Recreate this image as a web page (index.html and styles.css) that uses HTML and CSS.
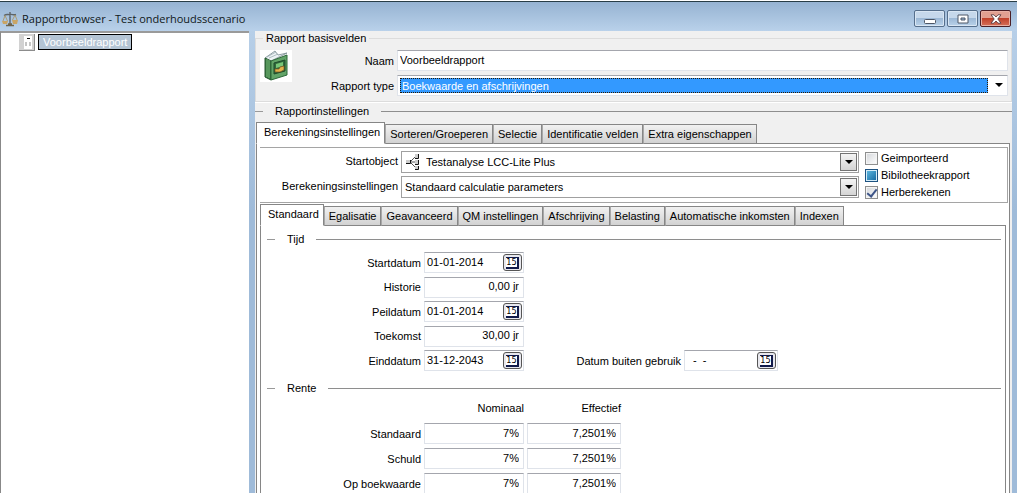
FILE: index.html
```html
<!DOCTYPE html>
<html lang="nl">
<head>
<meta charset="utf-8">
<title>Rapportbrowser - Test onderhoudsscenario</title>
<link rel="stylesheet" href="styles.css">
</head>
<body>
<div class="window">
  <header class="titlebar">
    <svg class="app-icon" width="16" height="16" viewBox="0 0 16 16" fill="none">
      <path d="M2 4.500C5 2.500 6 4 8 3.500S12 4.500 14 3.500M8 1v12" stroke="#5e6468" stroke-width="1.400"/>
      <path d="M3 4.500L1 10M3 4.500L5.500 10M13 4L10.500 9M13 4L15 9" stroke="#a9915b" stroke-width=".8"/>
      <path d="M0 10h6l-1 3H1zM10 9h6l-1 4h-4z" fill="#c9a566"/>
      <path d="M4 14.500h8M6 13h4" stroke="#6f654c" stroke-width="1.500"/>
    </svg>
    <h1 class="title">Rapportbrowser - Test onderhoudsscenario</h1>
    <div class="window-buttons">
      <button class="win-btn" type="button" aria-label="Minimaliseren"><svg width="12" height="10" viewBox="0 0 12 10"><rect x=".5" y="5.500" width="11" height="4" rx="1" fill="#fff" stroke="#4c5666"/></svg></button>
      <button class="win-btn" type="button" aria-label="Maximaliseren"><svg width="12" height="10" viewBox="0 0 12 10"><path fill-rule="evenodd" d="M1 1h10v8H1zM4 4h4v2H4z" fill="#fff" stroke="#4c5666"/></svg></button>
      <button class="win-btn win-close" type="button" aria-label="Sluiten"><svg width="12" height="10" viewBox="0 0 12 10"><path d="M1 .8h3L6 3 8 .8h3L7.800 5 11 9.200H8L6 7 4 9.200H1L4.200 5z" fill="#fff" stroke="#5c3b41" stroke-width=".9"/></svg></button>
    </div>
  </header>

  <div class="content">
    <nav class="tree" aria-label="Rapporten">
      <div class="tree-item">
        <svg width="16" height="17" viewBox="0 0 16 17"><path d="M0 0h16v17H0z" fill="#d2d2d2"/><path d="M15.500 0v17M0 16.500h16" stroke="#8c8c8c"/><path d="M5 2h8v13H5z" fill="#fff"/><path d="M8 4.500h3" stroke="#000"/><path d="M6 8h2v4H6zM10 8h2v4h-2z" fill="#c4c4c4"/></svg>
        <a class="tree-label" href="#voorbeeld">Voorbeeldrapport</a>
      </div>
    </nav>

    <main class="panel">
      <fieldset class="basics">
        <legend>Rapport basisvelden</legend>
        <div class="basics-body">
          <svg class="book" width="32" height="32" viewBox="0 0 32 32">
            <path d="M0 0h32v32H0z" fill="#fff"/>
            <path d="M5 8L15 1l3 4 9-2-16 8z" fill="#edf3f5" stroke="#73868d" stroke-width=".8"/>
            <path d="M7 7l9-5M9 8l9-4" stroke="#9eafb5" stroke-width=".8"/>
            <path d="M5 8l6 3v19l-6-3z" fill="#3c7843" stroke="#275831"/>
            <path d="M11 11l16-6v20l-16 5z" fill="#62a468" stroke="#2c6838"/>
            <path d="M7 9v18M9 10v18" stroke="#72b777"/>
            <path d="M14 13l11-3v11l-11 3z" fill="#2f6b3d" stroke="#1e4b2a"/>
            <path d="M16 14l7-2v4l-7 2z" fill="#79c778"/>
            <path d="M15 19h4l1-2 4-1v4l-4 2h-5z" fill="#e3b34d" stroke="#76521c" stroke-width=".7"/>
          </svg>
          <label for="naam">Naam</label>
          <input class="field" id="naam" type="text" value="Voorbeeldrapport">
          <label for="type">Rapport type</label>
          <div class="type-combo">
            <select id="type"><option>Boekwaarde en afschrijvingen</option></select>
            <span class="arrow"></span>
          </div>
        </div>
      </fieldset>

      <h2 class="section-title settings-title">Rapportinstellingen</h2>

      <div class="tabs" role="tablist">
        <button class="tab active" type="button" role="tab" aria-selected="true">Berekeningsinstellingen</button>
        <button class="tab" type="button" role="tab">Sorteren/Groeperen</button>
        <button class="tab" type="button" role="tab">Selectie</button>
        <button class="tab" type="button" role="tab">Identificatie velden</button>
        <button class="tab" type="button" role="tab">Extra eigenschappen</button>
      </div>

      <section class="page outer-page">
        <div class="calc">
          <div class="calc-fields">
            <label for="start">Startobject</label>
            <div class="combo">
              <svg class="node-icon" width="14" height="16" viewBox="0 0 14 16"><path d="M4 8l5-5M4 8h5M4 8l5 5" stroke="#555" fill="none"/><path d="M0 6h4v4H0zM9 0h3v4H9zM9 6h3v4H9zM9 12h3v4H9z" fill="#ccc"/><path d="M0 9.500h4.500V6M9 4.500h3.500V0M9 10.500h3.500V6M9 15.500h3.500V12" stroke="#111" fill="none"/></svg>
              <select id="start"><option>Testanalyse LCC-Lite Plus</option></select>
              <span class="arrow-box"><span class="arrow"></span></span>
            </div>
            <label for="calc">Berekeningsinstellingen</label>
            <div class="combo">
              <select id="calc"><option>Standaard calculatie parameters</option></select>
              <span class="arrow-box"><span class="arrow"></span></span>
            </div>
          </div>
          <div class="checks">
            <label><input class="check" type="checkbox">Geimporteerd</label>
            <label><input class="check partial" type="checkbox">Bibilotheekrapport</label>
            <label><input class="check" type="checkbox" checked>Herberekenen</label>
          </div>
        </div>

        <div class="tabs" role="tablist">
          <button class="tab active" type="button" role="tab" aria-selected="true">Standaard</button>
          <button class="tab" type="button" role="tab">Egalisatie</button>
          <button class="tab" type="button" role="tab">Geavanceerd</button>
          <button class="tab" type="button" role="tab">QM instellingen</button>
          <button class="tab" type="button" role="tab">Afschrijving</button>
          <button class="tab" type="button" role="tab">Belasting</button>
          <button class="tab" type="button" role="tab">Automatische inkomsten</button>
          <button class="tab" type="button" role="tab">Indexen</button>
        </div>

        <section class="page inner-page">
          <h3 class="section-title">Tijd</h3>
          <div class="time">
            <label for="t1">Startdatum</label>
            <div class="date"><input id="t1" type="text" value="01-01-2014"><button class="cal" type="button"><span>15</span></button></div>
            <label class="first" for="t2">Historie</label>
            <input class="field num" id="t2" type="text" value="0,00 jr">
            <label class="first" for="t3">Peildatum</label>
            <div class="date"><input id="t3" type="text" value="01-01-2014"><button class="cal" type="button"><span>15</span></button></div>
            <label class="first" for="t4">Toekomst</label>
            <input class="field num" id="t4" type="text" value="30,00 jr">
            <label class="first" for="t5">Einddatum</label>
            <div class="date"><input id="t5" type="text" value="31-12-2043"><button class="cal" type="button"><span>15</span></button></div>
            <label for="t6">Datum buiten gebruik</label>
            <div class="date"><input class="blank" id="t6" type="text" value="-  -"><button class="cal" type="button"><span>15</span></button></div>
          </div>

          <h3 class="section-title">Rente</h3>
          <table class="rates">
            <thead><tr><td></td><th scope="col">Nominaal</th><th scope="col">Effectief</th></tr></thead>
            <tbody>
              <tr><th scope="row">Standaard</th><td><input class="field num" aria-label="Standaard nominaal" value="7%"></td><td><input class="field num" aria-label="Standaard effectief" value="7,2501%"></td></tr>
              <tr><th scope="row">Schuld</th><td><input class="field num" aria-label="Schuld nominaal" value="7%"></td><td><input class="field num" aria-label="Schuld effectief" value="7,2501%"></td></tr>
              <tr><th scope="row">Op boekwaarde</th><td><input class="field num" aria-label="Op boekwaarde nominaal" value="7%"></td><td><input class="field num" aria-label="Op boekwaarde effectief" value="7,2501%"></td></tr>
            </tbody>
          </table>
        </section>
      </section>
    </main>
  </div>
</div>
</body>
</html>
```
FILE: styles.css
```css
* { box-sizing: border-box; }

body {
  margin: 0;
  background: #fff;
  color: #000;
  font: 11px/14px "Liberation Sans", Arial, sans-serif;
  overflow: hidden;
}

input, select, button { font: inherit; color: inherit; margin: 0; border-radius: 0; }
input { min-width: 0; }
select { appearance: none; border: 0; background: transparent; outline: 0; }

.window {
  height: 100vh;
  display: flex;
  flex-direction: column;
  padding-top: 1px;
  background: #fff;
}

/* Title bar */
.titlebar {
  flex: none;
  height: 30px;
  display: flex;
  align-items: center;
  gap: 4px;
  padding: 4px 6px 0 2px;
  border-top: 1px solid #283d46;
  background: linear-gradient(#96b3d2, #b9d1ea);
}
.title {
  flex: 1;
  margin: 0;
  font: 11px/16px "Open Sans", "Noto Sans", sans-serif;
  color: #101820;
  white-space: nowrap;
}
.window-buttons { display: flex; gap: 2px; }
.win-btn {
  width: 31px;
  height: 17px;
  padding: 0;
  display: grid;
  place-items: center;
  border: 1px solid #566f8c;
  border-radius: 2px;
  background: linear-gradient(#c6d8eb 45%, #9db9d6 50%, #b9d2ea);
  box-shadow: inset 0 0 0 1px #d9e6f3;
}
.win-close {
  border-color: #4a1e25;
  background: linear-gradient(#e2a091 45%, #c1422b 50%, #d6705a);
  box-shadow: inset 0 0 0 1px #e8b0a4;
}

/* Columns */
.content {
  flex: 1;
  min-height: 0;
  display: grid;
  grid-template-columns: 249px minmax(0, 1fr);
  gap: 6px;
  padding-right: 5px;
  background: linear-gradient(#b7cfe8, #9fbbd9 180px);
}
.tree {
  padding: 1px 0 0 18px;
  background: #fff;
  border-top: 2px solid #9a9a9a;
  border-left: 1px solid #888;
}
.tree-item { display: flex; gap: 3px; }
.tree-label {
  align-self: start;
  padding: 0 4px;
  border: 1px solid #000;
  background: #b4c4d4;
  color: #fff;
  line-height: 14px;
  text-decoration: none;
}
.panel {
  display: flex;
  flex-direction: column;
  min-height: 0;
  background: #f0f0f0;
}

/* Basic fields */
.basics {
  flex: none;
  margin: 0;
  padding: 5px 3px 5px 4px;
  border: 1px solid #dcdcdc;
  box-shadow: 0 1px #fff;
}
.basics legend { margin-left: 3px; padding: 0 3px; }
.basics-body {
  display: grid;
  grid-template-columns: 32px 99px minmax(0, 1fr);
  grid-auto-rows: 21px;
  gap: 4px 3px;
  align-items: center;
}
.basics-body label { text-align: right; }
.book { grid-row: 1 / 3; align-self: start; }
.field, .date, .type-combo {
  width: 100%;
  height: 21px;
  border: 1px solid #dfe3ea;
  border-top-color: #a4a6ad;
  background: #fff;
}
.field { padding: 0 2px 2px; }
.field.num { padding-right: 4px; text-align: right; }
.type-combo { display: flex; align-items: center; padding: 0 4px 1px 2px; }
.type-combo select {
  flex: 1;
  height: 15px;
  padding: 0 1px;
  border: 1px dotted #2b1a00;
  background: #3399ff;
  color: #fff;
}
.arrow {
  border: 4px solid transparent;
  border-top-color: #000;
  border-bottom: 0;
}
.type-combo .arrow { margin-left: 7px; }

/* Headings with a rule on both sides */
.section-title {
  flex: none;
  display: flex;
  align-items: center;
  gap: 12px;
  margin: 0;
  font: inherit;
}
.section-title::before { content: ""; width: 8px; border-top: 1px solid #999; }
.section-title::after { content: ""; flex: 1; border-top: 1px solid #8e8e8e; }
.settings-title { padding: 2px 0 4px; }

/* Tabs */
.tabs {
  flex: none;
  display: flex;
  align-items: flex-end;
  position: relative;
}
.tab {
  height: 20px;
  padding: 0 4px;
  border: 1px solid #868686;
  border-left-color: #a8a8a8;
  background: linear-gradient(#f1f1f1, #d2d2d2);
  white-space: nowrap;
}
.tab.active {
  height: 22px;
  padding: 0 4px 2px 7px;
  border-color: #868686;
  border-bottom-color: #fff;
  background: #fff;
}
.page {
  display: flex;
  flex-direction: column;
  flex: 1;
  margin-top: -1px;
  min-height: 0;
  border: 1px solid #868686;
  border-bottom: 0;
  background: #fff;
}
.panel > .tabs { margin-left: 1px; }
.outer-page { margin-left: 1px; margin-right: 2px; padding: 3px 1px 0 3px; }
.inner-page { margin-right: 2px; padding: 6px 4px 0 6px; }

/* Calculation settings */
.calc {
  flex: none;
  display: flex;
  gap: 6px;
  padding: 3px 41px 3px 0;
  margin-bottom: 1px;
  border: 1px solid #a5a5a5;
  border-width: 1px 1px 1px 0;
}
.calc-fields {
  flex: 1;
  display: grid;
  grid-template-columns: 138px minmax(0, 1fr);
  grid-auto-rows: 22px;
  gap: 3px;
}
.calc-fields label { text-align: right; padding-top: 3px; }
.combo {
  display: flex;
  align-items: center;
  padding: 1px;
  border: 1px solid #a0a0a0;
}
.combo select { flex: 1; min-width: 0; height: 18px; padding: 0 2px; }
.node-icon { margin: 0 4px 0 3px; }
.arrow-box {
  width: 17px;
  height: 18px;
  display: grid;
  place-items: center;
  border: 1px solid #747474;
  background: linear-gradient(#f4f4f4, #d4d4d4);
}
.checks { width: 101px; display: grid; grid-auto-rows: 14px; gap: 3px; white-space: nowrap; }
.checks label { display: flex; align-items: center; gap: 3px; }
.check {
  appearance: none;
  flex: none;
  width: 13px;
  height: 13px;
  display: grid;
  place-items: center;
  border: 1px solid #8e8f8f;
  background: linear-gradient(135deg, #d2d5d9, #fff);
  box-shadow: inset 0 0 0 1px #f4f4f4;
}
.check:checked::after {
  content: "";
  width: 4px;
  height: 8px;
  border: solid #3d5487;
  border-width: 0 2px 2px 0;
  transform: rotate(38deg);
}
.check.partial {
  border-color: #1d5281;
  background: linear-gradient(135deg, #62bde4, #12659e);
  box-shadow: inset 0 0 0 1px #d5ecf8;
}

/* Time fields */
.time {
  display: grid;
  grid-template-columns: 154px 100px 154px 94px;
  grid-template-rows: 21px 22px 21px 22px 21px;
  gap: 3px;
  align-items: center;
  padding: 6px 0 10px;
}
.time label { text-align: right; }
.time .first { grid-column: 1; }
.date { display: flex; align-items: center; padding: 0 1px; }
.date input { flex: 1; height: 18px; padding: 0 1px 1px; border: 0; background: transparent; }
.date .blank { padding-left: 7px; white-space: pre; }
.cal {
  flex: none;
  width: 19px;
  height: 17px;
  padding: 0;
  display: grid;
  place-items: center;
  border: 1px solid #555;
  border-radius: 3px;
  background: #e8e8ee;
}
.cal span {
  width: 13px;
  height: 12px;
  border: solid #111a4a;
  border-width: 1px 2px 2px 0;
  background: #fff;
  font: 9px/9px "DejaVu Sans Condensed", sans-serif;
}

/* Interest table */
.rates { border-collapse: collapse; table-layout: fixed; width: 357px; margin-top: 6px; }
.rates th { padding: 0 3px 0 0; font-weight: normal; text-align: right; }
.rates td { padding: 0 3px 4px 0; }
.rates thead th { height: 21px; padding: 0 3px 8px 0; }
.rates thead td { width: 157px; }
.rates thead th:nth-child(2) { width: 103px; }
.rates tbody th { padding-bottom: 4px; }
.rates .field { display: block; }
```
